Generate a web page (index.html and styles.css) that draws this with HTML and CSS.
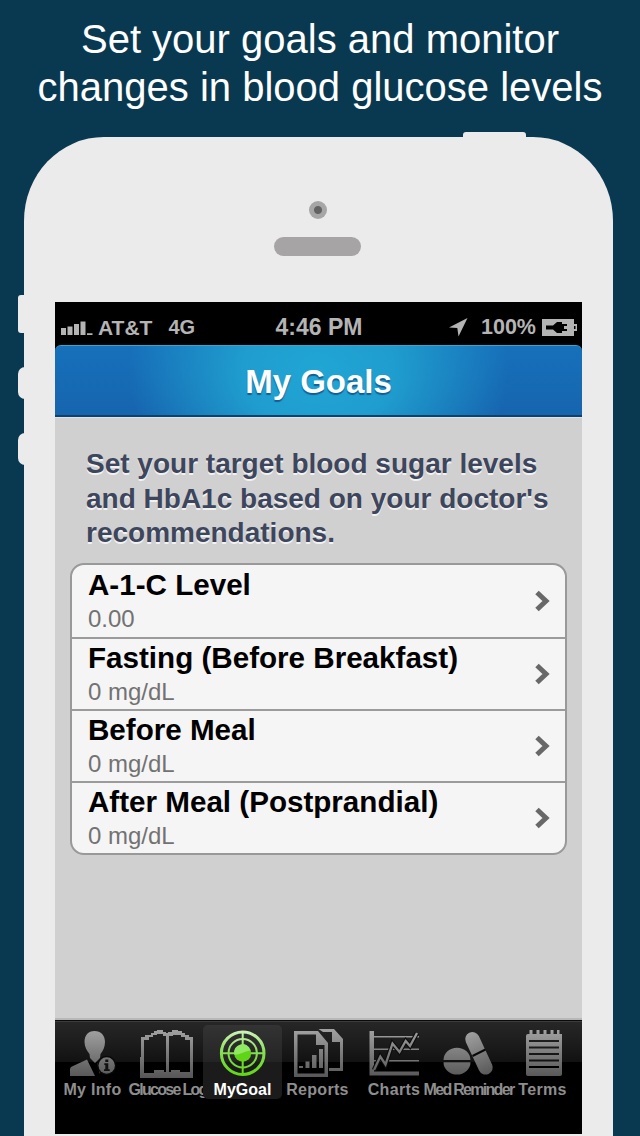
FILE: index.html
```
<!DOCTYPE html>
<html lang="en">
<head>
<meta charset="utf-8">
<title>My Goals</title>
<link rel="stylesheet" href="styles.css">
</head>
<body>
<h1 class="headline">Set your goals and monitor<br>changes in blood glucose levels</h1>
<main class="phone">
  <span class="hw power"></span>
  <span class="hw mute"></span>
  <span class="hw vol-up"></span>
  <span class="hw vol-down"></span>
  <div class="bezel">
    <span class="camera"></span>
    <span class="speaker"></span>
  </div>
  <section class="screen">
    <div class="status">
      <div class="left">
        <svg class="signal" width="32" height="14" viewBox="0 0 32 14" fill="#b4b4b4"><path d="M0 7h5v7H0zM6.5 5.5h5V14h-5zM13 3h5v11h-5zM19.5.5h5V14h-5zM26 12.3h5.5V14H26z"/></svg>
        <span class="carrier">AT&amp;T</span><span class="net">4G</span>
      </div>
      <span class="time">4:46 PM</span>
      <div class="right">
        <svg width="19" height="19" viewBox="0 0 19 19" fill="#b4b4b4"><path d="M18.5 0 9.5 18.5 8.3 10 0 9.500z"/></svg>
        <span class="percent">100%</span>
        <svg class="battery" width="35" height="17" viewBox="0 0 35 17"><path d="M0 0h32v5h3v7h-3v5H0z" fill="#b4b4b4"/><path d="M4 6.500h7l4-3.500h5v2h5v2h-3v3h3v2h-5v2h-5l-4-3.500H4z" fill="#000"/><path d="M32 7h1.500v3H32z" fill="#000"/></svg>
      </div>
    </div>
    <header class="navbar"><h2>My Goals</h2></header>
    <div class="content">
      <p class="intro">Set your target blood sugar levels<br>and HbA1c based on your doctor's<br>recommendations.</p>
      <ul class="list">
        <li><div><h3>A-1-C Level</h3><p>0.00</p></div><svg class="chev" viewBox="0 0 15 22"><path d="M2 2.500 11 11 2 19.500"/></svg></li>
        <li><div><h3>Fasting (Before Breakfast)</h3><p>0 mg/dL</p></div><svg class="chev" viewBox="0 0 15 22"><path d="M2 2.500 11 11 2 19.500"/></svg></li>
        <li><div><h3>Before Meal</h3><p>0 mg/dL</p></div><svg class="chev" viewBox="0 0 15 22"><path d="M2 2.500 11 11 2 19.500"/></svg></li>
        <li><div><h3>After Meal (Postprandial)</h3><p>0 mg/dL</p></div><svg class="chev" viewBox="0 0 15 22"><path d="M2 2.500 11 11 2 19.500"/></svg></li>
      </ul>
    </div>
    <nav class="tabs">
      <a class="tab">
        <svg viewBox="55 1026 75 54">
          <defs>
            <linearGradient id="g" gradientUnits="userSpaceOnUse" x1="0" y1="1029" x2="0" y2="1078"><stop offset="0" stop-color="#a2a2a2"/><stop offset="1" stop-color="#565656"/></linearGradient>
            <linearGradient id="v" gradientUnits="userSpaceOnUse" x1="0" y1="1029" x2="0" y2="1077"><stop offset="0" stop-color="#d3f5bf"/><stop offset=".5" stop-color="#83df50"/><stop offset="1" stop-color="#5dd70f"/></linearGradient>
          </defs>
          <path fill="url(#g)" d="M94.500 1031c6.500 0 10.500 4.500 10.500 11 0 5-2 9-4.500 12l-.5 4-5 5-5-5-.5-4c-2.500-3-5-7-5-12 0-6.500 3.500-11 10-11z"/>
          <path fill="url(#g)" d="m87 1059.500 8 16.500H70v-6.500c0-1.500 1-2.500 2.500-3.200zM102 1058l-2 16-3-10z"/>
          <circle cx="106.700" cy="1065.500" r="9.700" fill="#080808"/><circle cx="106.700" cy="1065.500" r="8.200" fill="url(#g)"/>
          <path fill="#111" d="M105.300 1059.500h3v2.500h-3zM104.300 1063.300h4v6h1.400v1.700h-5.700v-1.700h1.300v-4.300h-1z"/>
        </svg><span class="spread">My Info</span>
      </a>
      <a class="tab">
        <svg viewBox="130 1026 75 54" shape-rendering="crispEdges">
          <path fill="url(#g)" fill-rule="evenodd" d="M141 1037h4v-2h6v-2h3v-2h3v-1h6v2h3v1h2v-1h4v-2h6v1h4v2h3v2h4v2h4v41h-53zM144 1040v33h10v-3h10v2h2v-36h-3v-2h-6v1h-4v2h-4v3zM169 1036v36h2v-2h9v2h10v-32h-5v-3h-4v-2h-8v1z"/>
        </svg><span class="tight">Glucose Log</span>
      </a>
      <a class="tab active">
        <svg viewBox="205 1026 75 54" fill="none" stroke="url(#v)">
          <circle cx="242.700" cy="1053.200" r="21.300" stroke-width="3"/>
          <circle cx="242.700" cy="1053.200" r="14.200" stroke-width="2"/>
          <path fill="url(#v)" stroke="none" d="M241.700 1031h2v44h-2zM220 1052.200h45v2h-45z"/>
          <circle cx="242.700" cy="1053.200" r="8.500" fill="#5fd516" stroke="none"/>
          <path fill="#91e963" stroke="none" d="M234.200 1054.800a8.500 8.500 0 1 1 16.500-4.300c-5 0-9 4-16.500 4.300z"/>
        </svg><span>MyGoal</span>
      </a>
      <a class="tab">
        <svg viewBox="280 1026 75 54">
          <path fill="url(#g)" d="M318.500 1029H334l9 10v32h-14v-3h11v-26h-8v-10h-9z"/>
          <path fill="url(#g)" fill-rule="evenodd" d="M294 1031h24l10 12v34h-34zm3.500 3.500v39h27V1045H316v-10.500z"/>
          <path fill="url(#g)" d="M299 1066h4v2h-4zM305.500 1061.500h4v6.500h-4zM312 1055h4.500v13H312zM319 1049h4v19h-4z"/>
        </svg><span class="spread">Reports</span>
      </a>
      <a class="tab">
        <svg viewBox="355 1026 75 54">
          <path fill="url(#g)" d="M369.500 1031h4.500v40.500h45v4h-49.500zM374 1036h45v1.500h-45zM374 1048.500h45v1.500h-45zM374 1060h45v1.500h-45z"/>
          <path fill="none" stroke="#0c0c0c" stroke-width="4.500" d="m374 1070 6.300-13.500 5.200 8 7-21 7 8.500 6.200-11 4.300 5 7-13"/>
          <path fill="none" stroke="url(#g)" stroke-width="2.300" d="m374 1070 6.300-13.500 5.200 8 7-21 7 8.500 6.200-11 4.300 5 7-13"/>
        </svg><span class="spread charts">Charts</span>
      </a>
      <a class="tab">
        <svg viewBox="430 1026 75 54">
          <path fill="url(#g)" d="M443.500 1060a13.500 12.300 0 0 1 27 0zM443.500 1062.300a13.500 12.300 0 0 0 27 0z"/>
          <rect x="471.700" y="1030.500" width="14.300" height="45.500" rx="7.100" fill="url(#g)" transform="rotate(-25 479 1053)"/>
          <path d="m472.500 1056 13-6.500" stroke="#090909" stroke-width="2"/>
        </svg><span class="tight med">Med Reminder</span>
      </a>
      <a class="tab">
        <svg viewBox="505 1026 75 54">
          <path fill="url(#g)" fill-rule="evenodd" d="M526 1034h3.500v-4h3v4h4v-4h3v4h4v-4h3v4h4v-4h3v4h3.500v-4h2.500v4h2.500v40q0 2-2 2h-32q-2 0-2-2v-38q0-2 2-2zM529 1040v2h30v-2zm0 6.500v2h30v-2zm0 6.500v2h30v-2zm0 6.500v2h30v-2zm0 6.500v2h30v-2z"/>
        </svg><span class="spread">Terms</span>
      </a>
    </nav>
  </section>
</main>
</body>
</html>
```
FILE: styles.css
```
* { box-sizing: border-box; margin: 0; padding: 0; }
body {
  width: 640px; height: 1136px; overflow: hidden;
  background: #093951;
  font-family: "Liberation Sans", Arial, sans-serif;
}
.headline {
  height: 137px; padding-top: 15px;
  color: #fff; font-weight: 400; font-size: 40px; line-height: 48px;
  text-align: center; white-space: nowrap;
}
.phone {
  position: relative;
  width: 589px; height: 1020px; margin-left: 24px;
  padding-left: 31px;
  background: #ebebeb;
  border-radius: 80px 80px 0 0 / 84px 84px 0 0;
}
.hw { position: absolute; background: #ebebeb; }
.power { left: 439px; top: -5px; width: 63px; height: 12px; border-radius: 3px; }
.mute { left: -6px; top: 158px; width: 9px; height: 38px; border-radius: 3px; }
.vol-up { left: -6px; top: 230px; width: 14px; height: 32px; border-radius: 8px; }
.vol-down { left: -6px; top: 296px; width: 14px; height: 32px; border-radius: 8px; }
.bezel {
  width: 525px; height: 165px; padding-top: 64px;
  display: flex; flex-direction: column; align-items: center; gap: 18px;
}
.camera { width: 18px; height: 18px; border-radius: 50%; background: radial-gradient(circle, #626262 3.5px, #a6a6a6 4.500px); }
.speaker { width: 87px; height: 19px; border-radius: 10px; background: #a6a4a5; }
.screen { width: 527px; height: 832px; background: #000; overflow: hidden; }
.status {
  height: 43px; padding: 8px 5px 0 6px;
  display: grid; grid-template-columns: 1fr auto 1fr; align-items: center;
  color: #b4b4b4; font-weight: 700; font-size: 21px; white-space: nowrap;
}
.left, .right { display: flex; align-items: center; }
.right { justify-content: flex-end; }
.carrier { margin-left: 5px; }
.net { margin-left: 16px; font-size: 20px; }
.time { font-size: 23px; }
.percent { margin: 0 6px 0 13px; font-size: 21.500px; }
.navbar {
  height: 72px; border-radius: 6px 6px 0 0;
  border-top: 1px solid #2fa9d6; border-bottom: 2px solid #0d426f;
  background: radial-gradient(ellipse 190px 150px at 50% 35%, #20a6d4 0, #1f9dce 40%, rgba(25,115,187,0) 100%), linear-gradient(#1770bb, #1665ae);
}
.navbar h2 { color: #fff; font-size: 33px; line-height: 71px; text-align: center; text-shadow: 0 2px 1px #145d94; }
.content {
  height: 603px; padding: 29px 15px 0;
  background: #d0d0d0; border-top: 1px solid #e2e2e2; border-bottom: 2px solid #b8b8b8;
}
.intro { padding-left: 16px; color: #3d465c; font-weight: 700; font-size: 28px; line-height: 34.700px; text-shadow: 0 1.500px 0 #f2f2f2; white-space: nowrap; }
.list {
  width: 497px; height: 292px; margin-top: 12px;
  display: grid; grid-template-rows: repeat(4, 1fr);
  border: 2px solid #999; border-radius: 14px;
  background: #f5f5f5; list-style: none;
}
.list li { display: flex; align-items: center; justify-content: space-between; padding: 0 15px 0 16px; }
.list li + li { border-top: 2px solid #9b9b9b; }
.list h3 { font-size: 29.600px; line-height: 36px; white-space: nowrap; color: #000; }
.list p { font-size: 24px; line-height: 32px; color: #727272; }
.chev { width: 15px; height: 22px; fill: none; stroke: #686868; stroke-width: 5; }
.tabs {
  height: 114px; padding-top: 5px;
  display: grid; grid-template-columns: repeat(7, 75px);
  background: linear-gradient(#0a0a0a 0 1px, #3b3b3b 1px 2px, #272727 2px, #121212 42px, #000 42px);
}
.tab {
  height: 74px; padding-top: 1px;
  display: flex; flex-direction: column; align-items: center;
  color: #8e8e8e; font-weight: 700; font-size: 16px; white-space: nowrap;
}
.tab svg { width: 75px; height: 54px; flex: none; }
.tab span { line-height: 20px; }
.active {
  width: 79px; margin-left: -2px; border-radius: 5px;
  color: #fff; background: linear-gradient(#333, #242424 37px, #1b1b1b 37px, #1b1b1b);
}
.spread { letter-spacing: .3px; }
.tight { letter-spacing: -1.700px; }
.charts { margin-left: 3px; }
.med { margin-left: 2px; }
```
